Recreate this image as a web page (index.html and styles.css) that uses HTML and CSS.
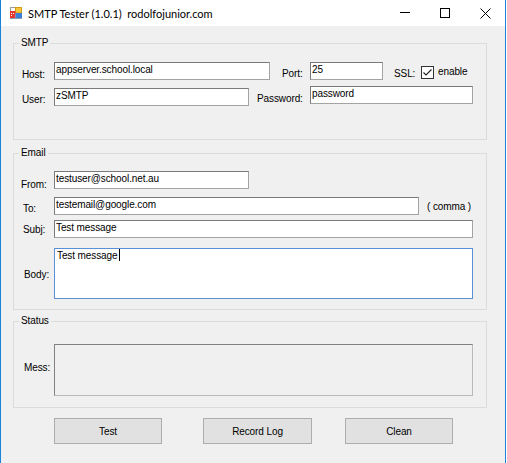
FILE: index.html
```html
<!DOCTYPE html>
<html lang="en">
<head>
<meta charset="utf-8">
<title>SMTP Tester (1.0.1)</title>
<link rel="stylesheet" href="styles.css">
</head>
<body>
<div class="window">
  <header class="titlebar">
    <svg class="app-icon" width="12" height="12" viewBox="0 0 12 12" aria-hidden="true">
      <rect x="0.5" y="0.5" width="5" height="4" fill="#fff" stroke="#9a9a9a"/>
      <rect x="5.5" y="0.5" width="6" height="5.5" fill="#f6c63a" stroke="#d49b12"/>
      <rect x="0" y="4" width="5.5" height="7" fill="#e2382d"/>
      <rect x="1" y="6" width="1" height="1" fill="#fff"/>
      <rect x="3" y="6" width="1" height="1" fill="#fff"/>
      <rect x="1" y="8" width="1" height="1" fill="#fff"/>
      <rect x="5.5" y="6" width="6.5" height="5" fill="#3a7fd8"/>
      <rect x="0" y="11" width="12" height="1" fill="#8a9bb0"/>
    </svg>
    <span class="title">SMTP Tester (1.0.1)&nbsp;&nbsp;rodolfojunior.com</span>
    <div class="caption-buttons">
      <span class="cbtn"><svg width="10" height="10" viewBox="0 0 10 10"><path d="M0 4.5H10" stroke="#000" stroke-width="1"/></svg></span>
      <span class="cbtn"><svg width="10" height="10" viewBox="0 0 10 10"><rect x="0.5" y="0.5" width="9" height="9" fill="none" stroke="#000"/></svg></span>
      <span class="cbtn"><svg width="11" height="11" viewBox="0 0 11 11"><path d="M0.5 0.5L10.5 10.5M10.5 0.5L0.5 10.5" stroke="#000" stroke-width="1"/></svg></span>
    </div>
  </header>

  <main class="client">
    <section class="group group-smtp">
      <span class="group-caption">SMTP</span>
      <div class="row">
        <label class="lbl lbl-host">Host:</label>
        <input class="tb tb-host" type="text" value="appserver.school.local">
        <label class="lbl lbl-port">Port:</label>
        <input class="tb tb-port" type="text" value="25">
        <label class="lbl lbl-ssl">SSL:</label>
        <span class="check"><svg width="11" height="11" viewBox="0 0 11 11"><path d="M1.5 5.5L4 8L9.5 2.5" fill="none" stroke="#222" stroke-width="1.1"/></svg></span>
        <span class="lbl lbl-enable">enable</span>
      </div>
      <div class="row row-user">
        <label class="lbl lbl-user">User:</label>
        <input class="tb tb-user" type="text" value="zSMTP">
        <label class="lbl lbl-pass">Password:</label>
        <input class="tb tb-pass" type="text" value="password">
      </div>
    </section>

    <section class="group group-email">
      <span class="group-caption">Email</span>
      <div class="row">
        <label class="lbl lbl-from">From:</label>
        <input class="tb tb-from" type="text" value="testuser@school.net.au">
      </div>
      <div class="row row-to">
        <label class="lbl lbl-to">To:</label>
        <input class="tb tb-to" type="text" value="testemail@google.com">
        <span class="lbl lbl-comma">( comma )</span>
      </div>
      <div class="row row-subj">
        <label class="lbl lbl-subj">Subj:</label>
        <input class="tb tb-subj" type="text" value="Test message">
      </div>
      <div class="row row-body">
        <label class="lbl lbl-body">Body:</label>
        <div class="tb-body">Test message<span class="caret"></span></div>
      </div>
    </section>

    <section class="group group-status">
      <span class="group-caption">Status</span>
      <div class="row row-mess">
        <label class="lbl lbl-mess">Mess:</label>
        <textarea class="tb-mess" readonly></textarea>
      </div>
    </section>

    <div class="actions">
      <button class="btn btn-test" type="button">Test</button>
      <button class="btn btn-log" type="button">Record Log</button>
      <button class="btn btn-clean" type="button">Clean</button>
    </div>
  </main>
</div>
</body>
</html>
```

FILE: styles.css
```css
body {
  margin: 0;
  background: #fff;
  font-family: "Liberation Sans", Arial, sans-serif;
  font-size: 10px;
  letter-spacing: -0.1px;
  color: #000;
}

.window {
  width: 506px;
  height: 463px;
  box-sizing: border-box;
  border-left: 1px solid #1883d7;
  border-right: 1px solid #1883d7;
  background: #f0f0f0;
  overflow: hidden;
}

/* title bar */
.titlebar {
  height: 26px;
  background: #fff;
  display: flex;
  align-items: center;
}

.app-icon {
  margin-left: 9px;
  flex: none;
}

.title {
  margin-left: 6px;
  font-family: "Lato", "Noto Sans", sans-serif;
  font-size: 11px;
  letter-spacing: 0;
  color: #000;
  white-space: nowrap;
}

.caption-buttons {
  margin-left: auto;
  display: flex;
}

.cbtn {
  width: 40px;
  height: 26px;
  display: flex;
  align-items: center;
  justify-content: center;
}

/* client area */
.client {
  padding: 17px 0 0 12px;
}

.group {
  position: relative;
  box-sizing: border-box;
  width: 474px;
  border: 1px solid #dcdcdc;
}

.group-smtp {
  height: 97px;
  padding-top: 18px;
}

.group-email {
  height: 157px;
  margin-top: 13px;
  padding-top: 17px;
}

.group-status {
  height: 87px;
  margin-top: 11px;
  padding-top: 22px;
}

.group-caption {
  position: absolute;
  top: -8px;
  left: 5px;
  padding: 0 2px;
  background: #f0f0f0;
  line-height: 13px;
}

.row {
  display: flex;
  align-items: flex-start;
  height: 18px;
}

.lbl {
  flex: none;
  line-height: 13px;
  white-space: nowrap;
}

/* text boxes */
.tb {
  flex: none;
  box-sizing: border-box;
  height: 18px;
  margin: 0;
  padding: 0 1px 3px;
  border: 1px solid;
  border-color: #7a7a7a #a3a3a3 #a3a3a3 #7a7a7a;
  background: #fff;
  font: inherit;
  letter-spacing: inherit;
  color: #000;
  outline: none;
}

/* SMTP rows */
.lbl-host { margin: 6px 0 0 8px; width: 32px; }
.tb-host { width: 216px; }
.lbl-port { margin: 5px 0 0 12px; width: 28px; }
.tb-port { width: 73px; }
.lbl-ssl { margin: 5px 0 0 11px; width: 27px; }
.check {
  flex: none;
  box-sizing: border-box;
  width: 13px;
  height: 13px;
  margin-top: 4px;
  border: 1px solid #333;
  background: #fff;
  display: flex;
}
.lbl-enable { margin: 3px 0 0 4px; }

.row-user { margin-top: 6px; }
.lbl-user { margin: 7px 0 0 8px; width: 32px; }
.tb-user { width: 195px; margin-top: 2px; }
.lbl-pass { margin: 6px 0 0 8px; width: 53px; }
.tb-pass { width: 163px; }

/* Email rows */
.lbl-from { margin: 7px 0 0 7px; width: 33px; }
.tb-from { width: 195px; }

.row-to { margin-top: 8px; }
.lbl-to { margin: 5px 0 0 9px; width: 31px; }
.tb-to { width: 365px; }
.lbl-comma { margin: 3px 0 0 8px; }

.row-subj { margin-top: 5px; }
.lbl-subj { margin: 3px 0 0 9px; width: 31px; }
.tb-subj { width: 419px; }

.row-body { margin-top: 10px; height: 51px; }
.lbl-body { margin: 20px 0 0 10px; width: 30px; }
.tb-body {
  flex: none;
  box-sizing: border-box;
  width: 419px;
  height: 51px;
  padding: 0 2px;
  border: 1px solid #5b8fd8;
  background: #fff;
  line-height: 13px;
}

.caret {
  display: inline-block;
  width: 1px;
  height: 12px;
  margin-left: 1px;
  background: #000;
  vertical-align: -2px;
}

/* Status */
.row-mess { height: 52px; }
.lbl-mess { margin: 17px 0 0 10px; width: 30px; }
.tb-mess {
  flex: none;
  box-sizing: border-box;
  width: 419px;
  height: 52px;
  margin: 0;
  padding: 0 2px;
  border: 1px solid;
  border-color: #828282 #b9b9b9 #b9b9b9 #828282;
  background: #f0f0f0;
  resize: none;
  font: inherit;
  outline: none;
}

/* command buttons */
.actions {
  display: flex;
  margin-top: 10px;
  padding-left: 41px;
}

.btn {
  flex: none;
  box-sizing: border-box;
  width: 108px;
  height: 26px;
  margin: 0;
  padding: 0;
  border: 1px solid #adadad;
  background: #e1e1e1;
  font: inherit;
  letter-spacing: inherit;
  color: #000;
}

.btn-log { margin-left: 41px; width: 109px; }
.btn-clean { margin-left: 33px; }
```
